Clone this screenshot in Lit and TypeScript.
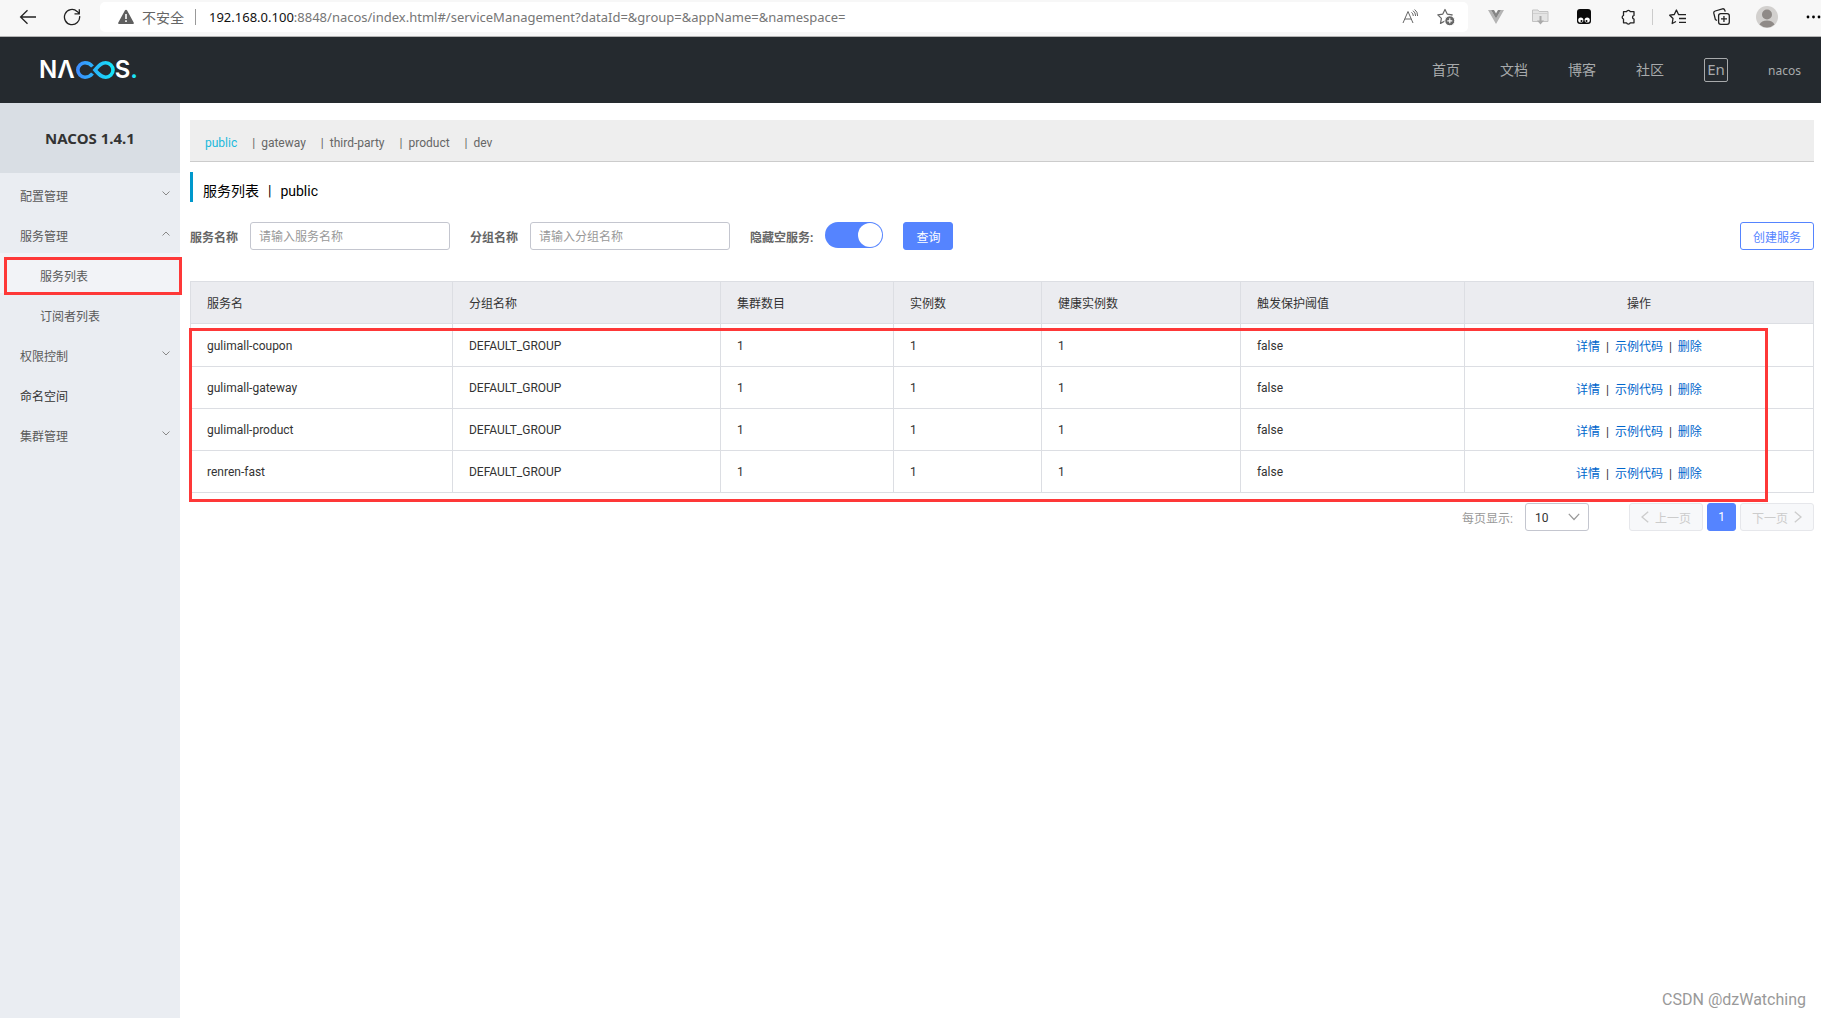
import { LitElement, html, css, svg, nothing } from "lit";
import { customElement, property, state } from "lit/decorators.js";
import { classMap } from "lit/directives/class-map.js";

const fonts = css`Roboto, "Noto Sans CJK SC", sans-serif`;

const reset = css`
  *, *::before, *::after { box-sizing: border-box; }
  button, input, select { font: inherit; color: inherit; margin: 0; }
  button { border: 0; background: none; padding: 0; cursor: pointer; }
  a { color: inherit; text-decoration: none; }
  ul { list-style: none; margin: 0; padding: 0; }
  svg { display: block; flex: none; }
`;

@customElement("browser-bar")
export class BrowserBar extends LitElement {
  static styles = [reset, css`
    :host {
      display: flex; height: 37px; padding-bottom: 3px; align-items: center;
      background: #f7f7f7; border-bottom: 1px solid #b4b4b4; overflow: hidden;
      font-family: "Noto Sans", "Noto Sans CJK SC", sans-serif; font-size: 13px;
    }
    .tool { flex: none; width: 44px; height: 30px; display: flex; align-items: center; justify-content: center; }
    .first { margin-left: 6px; }
    .address {
      flex: 1; min-width: 0; height: 30px; display: flex; align-items: center; background: #fff;
      border-radius: 5px; padding: 0 4px 0 18px; margin: 0 6px; color: #767676;
    }
    .unsafe { font-size: 14px; margin-left: 8px; color: #666; }
    .bar { width: 1px; height: 16px; background: #999; margin: 0 13px 0 11px; }
    .url { flex: 1; white-space: nowrap; overflow: hidden; }
    .host { color: #111; }
    .small { width: 36px; }
    .split { width: 1px; height: 16px; background: #ccc; margin: 0 2px; }
    .more { width: 16px; margin-left: 16px; }
    .avatar { margin-left: 2px; }
  `];

  render() {
    return html`
      <button class="tool first" aria-label="后退">
        <svg width="18" height="16" viewBox="0 0 18 16" fill="none" stroke="#222" stroke-width="1.3"><path d="M17 8H2M8.5 1.2 1.6 8l6.9 6.8"/></svg>
      </button>
      <button class="tool" aria-label="刷新">
        <svg width="18" height="18" viewBox="0 0 18 18" fill="none" stroke="#222" stroke-width="1.3"><path d="M16.6 8.2a7.6 7.6 0 1 1-2.5-4.8l2 2M16.3 1.2v4.6h-4.8"/></svg>
      </button>
      <div class="address">
        <svg width="16" height="16" viewBox="0 0 16 16"><path d="M7 1.3a1.1 1.1 0 0 1 2 0l6.8 12.4A1 1 0 0 1 15 15H1a1 1 0 0 1-.8-1.3z" fill="#5f5f5f"/><path d="M7.2 5h1.6v5H7.2zM7.2 11.2h1.6v1.7H7.2z" fill="#fff"/></svg>
        <span class="unsafe">不安全</span><span class="bar"></span>
        <span class="url"><span class="host">192.168.0.100</span>:8848/nacos/index.html#/serviceManagement?dataId=&amp;group=&amp;appName=&amp;namespace=</span>
        <button class="tool small" aria-label="朗读此页内容">
          <svg width="17" height="16" viewBox="0 0 17 16" fill="none" stroke="#666"><path d="M1 14 6 2.500l5 11.500M2.800 10h6.400M9.500 3.300q1.800 1.300 1.800 3.700M11 1.700q2.600 1.800 2.600 5.300M12.600.5q3.200 2.200 3 6.500"/></svg>
        </button>
        <button class="tool small" aria-label="添加到收藏夹">
          <svg width="18" height="18" viewBox="0 0 18 18"><path d="m8 1.500 2.200 4.600 5 .7-3.600 3.500.8 5L8 13l-4.500 2.400.9-5L.8 6.800l5-.7z" fill="none" stroke="#666" stroke-width="1.2" stroke-linejoin="round"/><circle cx="12.8" cy="12.8" r="5" fill="#666" stroke="#fff"/><path d="M12.800 10.300v5M10.300 12.800h5" stroke="#fff" stroke-width="1.2"/></svg>
        </button>
      </div>
      <button class="tool" aria-label="Vue"><svg width="16" height="14" viewBox="0 0 16 14"><path d="M0 0h3l5 8.500L13 0h3L8 14z" fill="#b4b4b4"/><path d="M3 0h3l2 3.500L10 0h3L8 8.500z" fill="#858585"/></svg></button>
      <button class="tool" aria-label="下载"><svg width="17" height="16" viewBox="0 0 17 16"><path d="M.5 1h5.500l1 1.500H16v10H.5z" fill="#e4e4e4" stroke="#c2c2c2"/><path d="M1 4.500H16" stroke="#d0d0d0"/><path d="M7.500 7h2v4.500H12L8.500 15.500 5 11.500h2.500z" fill="#aaa"/></svg></button>
      <button class="tool" aria-label="Tampermonkey"><svg width="14" height="15" viewBox="0 0 14 15"><rect width="14" height="15" rx="3" fill="#0a0a0a"/><circle cx="3.800" cy="11" r="2.6" fill="#fff"/><circle cx="10.200" cy="11" r="2.6" fill="#fff"/><circle cx="4.500" cy="11.900" r="1"/><circle cx="9.500" cy="11.900" r="1"/></svg></button>
      <button class="tool" aria-label="扩展"><svg width="16" height="16" viewBox="0 0 16 16" fill="none" stroke="#222" stroke-width="1.3" stroke-linejoin="round"><path d="M3.500 2.700h3a2 2 0 0 1 3.800 0H14v3.700a1.900 1.900 0 0 0 0 3.700v3.700h-3.700a2 2 0 0 1-3.800 0h-3v-3.700a1.950 1.950 0 0 1 0-3.700z"/></svg></button>
      <span class="split"></span>
      <button class="tool" aria-label="收藏夹"><svg width="17" height="16" viewBox="0 0 17 16" fill="none" stroke="#222" stroke-width="1.3" stroke-linejoin="round"><path d="M10.200 5.600 9.500 5.500 7.400 1 5.300 5.500.7 6.200 4 9.500l-.8 5L7 12.500M9.800 5.700H17M10 9.500h7M10 13.300h7"/></svg></button>
      <button class="tool" aria-label="集锦"><svg width="17" height="17" viewBox="0 0 17 17" fill="none" stroke="#222" stroke-width="1.3"><rect x="5.600" y="5.600" width="10.700" height="10.700" rx="2.2"/><path d="M10.950 8v6M8 10.950h6M4 12.500l-1.600-.9L.8 5.200Q.5 3.500 2.200 3L9.500.8q1.700-.3 2.300 1.400l.4 1.500"/></svg></button>
      <button class="tool avatar" aria-label="个人资料"><svg width="22" height="22" viewBox="0 0 22 22"><circle cx="11" cy="11" r="11" fill="#d2d0ce"/><circle cx="11" cy="8.500" r="5" fill="#8f8a87"/><path d="M3.500 18.500a8 6 0 0 1 15 0 11 11 0 0 1-15 0z" fill="#8f8a87"/></svg></button>
      <button class="tool more" aria-label="更多"><svg width="16" height="4" viewBox="0 0 16 4"><circle cx="3" cy="2" r="1.400"/><circle cx="8.500" cy="2" r="1.400"/><circle cx="14" cy="2" r="1.400"/></svg></button>
    `;
  }
}

@customElement("site-header")
export class SiteHeader extends LitElement {
  static styles = [reset, css`
    :host {
      display: flex; align-items: center; justify-content: space-between; height: 66px;
      padding: 0 20px 0 39px; background: #252a2f; color: #a8aaac; font-family: ${fonts}; font-size: 14px;
    }
    .logo { display: flex; align-items: center; color: #fff; font: 600 24px/24px Inter, sans-serif; }
    .dot { color: #1be4f5; }
    nav { display: flex; align-items: center; gap: 40px; line-height: 20px; }
    .lang {
      width: 24px; height: 24px; border: 1px solid #a8aaac; border-radius: 2px;
      font: 15px/20px "Noto Sans", sans-serif; text-align: center; padding-bottom: 3px;
    }
    .user { font: 12px/20px "Noto Sans", sans-serif; padding-top: 2px; }
  `];

  render() {
    return html`
      <a class="logo" href="#/" aria-label="NACOS">
        <span>N</span><span>Λ</span>
        <svg width="40" height="18" viewBox="0 0 40 18" fill="none" stroke="url(#ring)" stroke-width="3.6">
          <defs><linearGradient id="ring" gradientUnits="userSpaceOnUse" x1="0" y1="0" x2="40" y2="0"><stop offset="0" stop-color="#3f86ff"/><stop offset="1" stop-color="#12e8f8"/></linearGradient></defs>
          <path d="M17.500 5.500C15.500 3 13 1.800 10 1.800a7.200 7.200 0 0 0 0 14.400c3 0 5.500-1.200 7.500-3.700M20 9c3.500-3.800 6-7.200 10.800-7.200a7.200 7.200 0 0 1 0 14.400C26 16.200 23.500 12.800 20 9z"/>
        </svg>
        <span>S</span><span class="dot">.</span>
      </a>
      <nav>
        ${["首页", "文档", "博客", "社区"].map((t) => html`<a href="#/">${t}</a>`)}
        <button class="lang">En</button>
        <a class="user" href="#/">nacos</a>
      </nav>
    `;
  }
}

interface MenuEntry { label: string; open?: boolean; leaf?: boolean; children?: string[]; }

@customElement("side-menu")
export class SideMenu extends LitElement {
  static styles = [reset, css`
    :host { display: block; background: #eaedf2; color: #5a5a5a; font-family: ${fonts}; font-size: 12px; }
    h1 {
      margin: 0; height: 70px; background: #d9dee4; color: #333; text-align: center;
      font: bold 15px/70px "Noto Sans", sans-serif;
    }
    .item {
      display: flex; align-items: center; justify-content: space-between; width: 100%; height: 40px;
      padding: 4px 10px 0 20px;
    }
    .item svg { margin-bottom: 4px; }
    .leaf { color: #333; }
    .sub { padding-left: 40px; }
    .current { position: relative; background: #f2f3f7; }
    .mark { position: absolute; inset: 4px -2px -2px 4px; border: 3px solid #fe3838; pointer-events: none; }
  `];

  @state() private menu: MenuEntry[] = [
    { label: "配置管理", children: [] },
    { label: "服务管理", open: true, children: ["服务列表", "订阅者列表"] },
    { label: "权限控制", children: [] },
    { label: "命名空间", leaf: true },
    { label: "集群管理", children: [] },
  ];

  private toggle(entry: MenuEntry) {
    this.menu = this.menu.map((m) => (m === entry ? { ...m, open: !m.open } : m));
  }

  private entry(m: MenuEntry) {
    if (m.leaf) return html`<li><a class="item leaf" href="#/namespace">${m.label}</a></li>`;
    return html`
      <li>
        <button class="item" aria-expanded=${m.open ? "true" : "false"} @click=${() => this.toggle(m)}>
          ${m.label}
          <svg width="8" height="5" viewBox="0 0 8 5" fill="none" stroke="#888"><path d=${m.open ? "M.5 4.500 4 1l3.500 3.500" : "M.5.5 4 4 7.500.5"} /></svg>
        </button>
        ${m.open ? html`<ul>${m.children!.map((c, i) => html`
          <li class=${classMap({ current: i === 0 })}>
            <a class="item sub" href="#/serviceManagement">${c}</a>
            ${i === 0 ? html`<span class="mark"></span>` : nothing}
          </li>`)}</ul>` : nothing}
      </li>`;
  }

  render() {
    return html`<h1>NACOS 1.4.1</h1><ul>${this.menu.map((m) => this.entry(m))}</ul>`;
  }
}

@customElement("service-table")
export class ServiceTable extends LitElement {
  static styles = [reset, css`
    :host { display: block; position: relative; font-family: ${fonts}; font-size: 12px; color: #333; }
    table { width: 100%; border-collapse: collapse; table-layout: fixed; }
    th, td { height: 42px; padding: 1px 16px 0; border: 1px solid #dcdee3; text-align: left; font-weight: 400; }
    tbody tr:first-child td { height: 43px; }
    th { background: #ebecf0; padding-top: 0; }
    .name { width: 16.14%; }
    .group { width: 16.51%; }
    .clusters { width: 10.66%; }
    .instances { width: 9.12%; }
    .healthy { width: 12.26%; }
    .trigger { width: 13.8%; }
    .actions { text-align: center; }
    .actions a { color: #06c; }
    .sep { margin: 0 6px; }
    .mark { position: absolute; inset: 47px 46px -9px -1px; border: 3px solid #fe3838; pointer-events: none; }
  `];

  @property({ attribute: false }) names: string[] = [];

  render() {
    return html`
      <table>
        <thead><tr>
          <th class="name">服务名</th><th class="group">分组名称</th><th class="clusters">集群数目</th>
          <th class="instances">实例数</th><th class="healthy">健康实例数</th><th class="trigger">触发保护阈值</th>
          <th class="actions">操作</th>
        </tr></thead>
        <tbody>
          ${this.names.map((n) => html`<tr>
            <td>${n}</td><td>DEFAULT_GROUP</td><td>1</td><td>1</td><td>1</td><td>false</td>
            <td class="actions"><a href="#/detail">详情</a><span class="sep">|</span><a href="#/code">示例代码</a><span class="sep">|</span><a href="#/delete">删除</a></td>
          </tr>`)}
        </tbody>
      </table>
      <span class="mark"></span>
    `;
  }
}

@customElement("app-root")
export class AppRoot extends LitElement {
  static styles = [reset, css`
    :host {
      display: flex; flex-direction: column; min-height: 100vh; position: relative;
      background: #fff; font-family: ${fonts}; font-size: 12px; color: #333;
    }
    .body { flex: 1; display: flex; }
    side-menu { flex: none; width: 180px; }
    main { flex: 1; min-width: 0; padding: 17px 7px 0 10px; }
    .spaces {
      display: flex; align-items: center; height: 42px; padding: 5px 0 0 15px;
      background: #eee; border-bottom: 1px solid #ccc; color: #666;
    }
    .spaces li + li::before { content: "|"; margin: 0 6px 0 15px; }
    .active { color: #1ab9dc; }
    h2 {
      display: flex; gap: 9px; height: 30px; margin: 10px 0 20px; padding: 4px 0 0 10px;
      border-left: 3px solid #0098cc; font-size: 14px; line-height: 30px; font-weight: 400; color: #000;
    }
    form { display: flex; align-items: center; height: 28px; margin-bottom: 31px; }
    .label { font-weight: 700; color: #666; margin-right: 12px; }
    .text {
      width: 200px; height: 28px; border: 1px solid #c4c6cf; border-radius: 3px; padding: 2px 8px 0;
      margin-right: 20px; outline: 0;
    }
    .text::placeholder { color: #999; opacity: 1; }
    .switch {
      appearance: none; width: 58px; height: 26px; border-radius: 13px; background: #5584ff;
      margin: 0 20px 2px 0; padding: 1px; display: flex; justify-content: flex-end;
    }
    .switch::before { content: ""; width: 24px; height: 24px; border-radius: 50%; background: #fff; }
    .switch:not(:checked) { background: #c4c6cf; justify-content: flex-start; }
    .btn { height: 28px; padding: 0 12px; border: 1px solid #5584ff; border-radius: 3px; color: #5584ff; background: #fff; }
    .primary { background: #5584ff; color: #fff; }
    .create { margin-left: auto; }
    .pager { display: flex; align-items: center; justify-content: flex-end; gap: 4px; padding-top: 10px; }
    .size-label { color: #999; margin-right: 8px; }
    .size { position: relative; margin-right: 36px; }
    .size select {
      appearance: none; display: block; width: 64px; height: 28px; padding: 2px 9px 0; border: 1px solid #c4c6cf;
      border-radius: 3px; background: #fff; font-size: 12px;
    }
    .size svg { position: absolute; right: 9px; top: 10px; pointer-events: none; }
    .page {
      display: flex; align-items: center; justify-content: center; gap: 6px; width: 74px; height: 28px;
      border: 1px solid #e6e7eb; border-radius: 3px; background: #f7f8fa; color: #ccc;
    }
    .on { width: 29px; background: #5584ff; border-color: #5584ff; color: #fff; }
    .watermark {
      position: absolute; right: 15px; bottom: 8px; color: #999; font: 16px/20px Roboto, sans-serif;
    }
  `];

  @state() private hideEmpty = true;

  render() {
    const chevron = (d: string) => svg`<path d=${d} fill="none" stroke="#ccc" stroke-width="1.3" />`;
    return html`
      <browser-bar></browser-bar>
      <site-header></site-header>
      <div class="body">
        <side-menu></side-menu>
        <main>
          <ul class="spaces">
            ${["public", "gateway", "third-party", "product", "dev"].map((n, i) => html`<li><a class=${classMap({ active: i === 0 })} href="#/${n}">${n}</a></li>`)}
          </ul>
          <h2><span>服务列表</span><span>|</span><span>public</span></h2>
          <form @submit=${(e: Event) => e.preventDefault()}>
            <label class="label" for="service">服务名称</label>
            <input class="text" id="service" placeholder="请输入服务名称">
            <label class="label" for="group">分组名称</label>
            <input class="text" id="group" placeholder="请输入分组名称">
            <label class="label" for="hide">隐藏空服务:</label>
            <input class="switch" id="hide" type="checkbox" role="switch" .checked=${this.hideEmpty}
              @change=${(e: Event) => { this.hideEmpty = (e.target as HTMLInputElement).checked; }}>
            <button class="btn primary">查询</button>
            <button class="btn create" type="button">创建服务</button>
          </form>
          <service-table .names=${["gulimall-coupon", "gulimall-gateway", "gulimall-product", "renren-fast"]}></service-table>
          <div class="pager">
            <label class="size-label" for="size">每页显示:</label>
            <div class="size">
              <select id="size"><option>10</option><option>20</option><option>50</option></select>
              <svg width="12" height="8" viewBox="0 0 12 8" fill="none" stroke="#999" stroke-width="1.2"><path d="M.8.8 6 6.500 11.200.8"/></svg>
            </div>
            <button class="page" disabled><svg width="8" height="12" viewBox="0 0 8 12">${chevron("M7.200.8 1 6l6.200 5.200")}</svg>上一页</button>
            <button class="page on" aria-current="page">1</button>
            <button class="page" disabled>下一页<svg width="8" height="12" viewBox="0 0 8 12">${chevron("M.8.8 7 6 .8 11.200")}</svg></button>
          </div>
        </main>
      </div>
      <span class="watermark">CSDN @dzWatching</span>
    `;
  }
}
